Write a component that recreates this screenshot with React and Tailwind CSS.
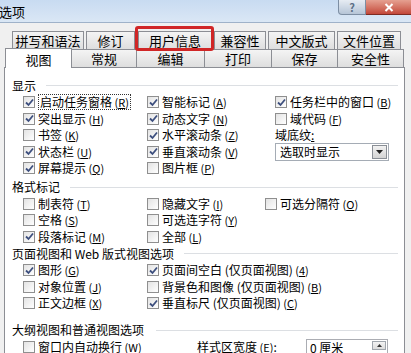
import React from 'react';

const font = { fontFamily: '"Noto Sans CJK SC", "Liberation Sans", sans-serif' };

// mnemonic label, e.g. "启动任务窗格" + "R"
const Label = ({ text, k }) => (
  <span className="whitespace-nowrap">
    {text}
    {k && (
      <span className="text-[11px]">
        {' '}(<span className="underline">{k}</span>)
      </span>
    )}
  </span>
);

const Check = ({ checked }) => (
  <span className="inline-flex w-[12px] h-[12px] shrink-0 border border-[#8f8f8f] bg-gradient-to-br from-[#e3e3e3] to-[#ffffff] items-center justify-center">
    {checked && (
      <svg width="9" height="9" viewBox="0 0 9 9">
        <path d="M1 4.5 L3.5 7 L8 1.5" fill="none" stroke="#3d4f7e" strokeWidth="1.8" />
      </svg>
    )}
  </span>
);

const Item = ({ checked, text, k, focus }) => (
  <div className="flex items-center h-[16.5px] gap-[3px]">
    <Check checked={checked} />
    <span className={focus ? 'border border-dotted border-[#333] px-[1px] leading-[13px]' : ''}>
      <Label text={text} k={k} />
    </span>
  </div>
);

const Group = ({ title, gap = 10 }) => (
  <div className="flex items-center h-[17px] pl-[7px] pr-[6px]">
    <span className="whitespace-nowrap">{title}</span>
    <div className="flex-1 h-px bg-[#dcdfe3]" style={{ marginLeft: gap }} />
  </div>
);

const backTabs = [
  ['拼写和语法', 72, 12],
  ['修订', 49, 2],
  ['用户信息', 74, 3],
  ['兼容性', 52, 2],
  ['中文版式', 67, 2],
  ['文件位置', 64, 2],
];

const frontTabs = [
  ['常规', 65],
  ['编辑', 68],
  ['打印', 67],
  ['保存', 66],
  ['安全性', 66],
];

export default function App() {
  return (
    <div className="w-[411px] h-[353px] overflow-hidden bg-[#f0f0f0] text-[12px] text-black relative" style={font}>
      {/* title bar */}
      <div className="flex items-start h-[23px] bg-gradient-to-b from-[#c8dbf1] to-[#dae7f5] border-b border-[#9fb2c9]">
        <span className="mt-[4px] ml-[-1px] text-[13px] leading-[15px]">选项</span>
        <div className="ml-auto flex">
          <div className="w-[28px] h-[15px] rounded-bl-[4px] border border-t-0 border-[#7d8ea3] bg-gradient-to-b from-[#e6ecf3] to-[#b6c5d7] flex items-center justify-center text-[11px] font-bold text-[#5c6f86] leading-none">
            ?
          </div>
          <div className="w-[45px] h-[15px] border-b border-[#7e2b22] bg-gradient-to-b from-[#e5a091] to-[#c2473a] flex items-center justify-center">
            <svg width="10" height="9" viewBox="0 0 10 9">
              <path d="M1.5 1 L8.5 8 M8.5 1 L1.5 8" stroke="#ffffff" strokeWidth="2" />
            </svg>
          </div>
        </div>
      </div>

      {/* tabs */}
      <div className="relative mt-[8px]">
        <div className="flex h-[18px]">
          {backTabs.map(([t, w, ml]) => (
            <div
              key={t}
              className="h-[18px] border border-b-0 border-[#8c8e94] bg-gradient-to-b from-[#f4f4f4] to-[#dedede] flex items-center justify-center text-[13px]"
              style={{ width: w, marginLeft: ml }}
            >
              {t}
            </div>
          ))}
        </div>
        <div className="flex h-[19px] items-end pl-[5px] -mt-[1px]">
          <div className="w-[67px] h-[20px] border border-b-0 border-[#8c8e94] bg-white flex items-start justify-center pt-[1px] text-[13px] relative z-10 -mb-px">
            视图
          </div>
          {frontTabs.map(([t, w]) => (
            <div
              key={t}
              className="h-[18px] border border-b-0 border-l-0 border-[#8c8e94] bg-gradient-to-b from-[#f4f4f4] to-[#dedede] flex items-center justify-center text-[13px]"
              style={{ width: w }}
            >
              {t}
            </div>
          ))}
        </div>
        {/* red highlight */}
        <div className="absolute left-[135px] top-[-5px] w-[79px] h-[25px] border-[3px] border-[#d02626] rounded-[3px]" />
      </div>

      {/* panel */}
      <div className="ml-[4px] w-[401px] h-[300px] border border-[#8c8e94] bg-white pt-[9px]">
        <Group title="显示" />
        <div className="grid grid-cols-[124px_128px_1fr] pl-[18px]">
          <div>
            <Item checked text="启动任务窗格" k="R" focus />
            <Item checked text="突出显示" k="H" />
            <Item text="书签" k="K" />
            <Item checked text="状态栏" k="U" />
            <Item checked text="屏幕提示" k="Q" />
          </div>
          <div>
            <Item checked text="智能标记" k="A" />
            <Item checked text="动态文字" k="N" />
            <Item checked text="水平滚动条" k="Z" />
            <Item checked text="垂直滚动条" k="V" />
            <Item text="图片框" k="P" />
          </div>
          <div>
            <Item checked text="任务栏中的窗口" k="B" />
            <Item text="域代码" k="F" />
            <div className="h-[16.5px] flex items-center">
              <span>域底纹<span className="underline">:</span></span>
            </div>
            <div className="w-[114px] h-[18px] mt-[-0.5px] border border-[#a5acb5] flex items-center">
              <span className="pl-[4px] flex-1">选取时显示</span>
              <div className="w-[15px] h-[14px] mr-[1px] border border-[#8a8f96] bg-gradient-to-b from-[#f2f2f2] to-[#d4d4d4] flex items-center justify-center">
                <svg width="7" height="4" viewBox="0 0 7 4">
                  <path d="M0 0 H7 L3.5 4 Z" fill="#222" />
                </svg>
              </div>
            </div>
          </div>
        </div>

        <div className="mt-[2px]">
          <Group title="格式标记" />
        </div>
        <div className="grid grid-cols-[124px_118px_1fr] pl-[18px]">
          <div>
            <Item text="制表符" k="T" />
            <Item text="空格" k="S" />
            <Item checked text="段落标记" k="M" />
          </div>
          <div>
            <Item text="隐藏文字" k="I" />
            <Item text="可选连字符" k="Y" />
            <Item text="全部" k="L" />
          </div>
          <div>
            <Item text="可选分隔符" k="O" />
          </div>
        </div>

        <Group title="页面视图和 Web 版式视图选项" />
        <div className="grid grid-cols-[124px_1fr] pl-[18px]">
          <div>
            <Item checked text="图形" k="G" />
            <Item text="对象位置" k="J" />
            <Item text="正文边框" k="X" />
          </div>
          <div>
            <Item checked text="页面间空白 (仅页面视图)" k="4" />
            <Item text="背景色和图像 (仅页面视图)" k="B" />
            <Item checked text="垂直标尺 (仅页面视图)" k="C" />
          </div>
        </div>

        <div className="mt-[10px]">
          <Group title="大纲视图和普通视图选项" gap={12} />
        </div>
        <div className="flex items-start pl-[18px]">
          <div className="w-[174px]">
            <Item text="窗口内自动换行" k="W" />
          </div>
          <div className="w-[109px] h-[16.5px] flex items-center">
            <Label text="样式区宽度" k="E" />:
          </div>
          <div className="w-[82px] h-[18px] border border-[#abadb3] flex items-start">
            <span className="pl-[3px] flex-1 leading-[16px]">0 厘米</span>
            <div className="w-[14px] h-[9px] mt-[1px] mr-[1px] border border-[#a0a6ad] bg-gradient-to-b from-[#f3f3f3] to-[#dcdcdc] flex items-center justify-center">
              <svg width="5" height="3" viewBox="0 0 5 3">
                <path d="M0 3 H5 L2.5 0 Z" fill="#333" />
              </svg>
            </div>
          </div>
        </div>
      </div>
    </div>
  );
}
